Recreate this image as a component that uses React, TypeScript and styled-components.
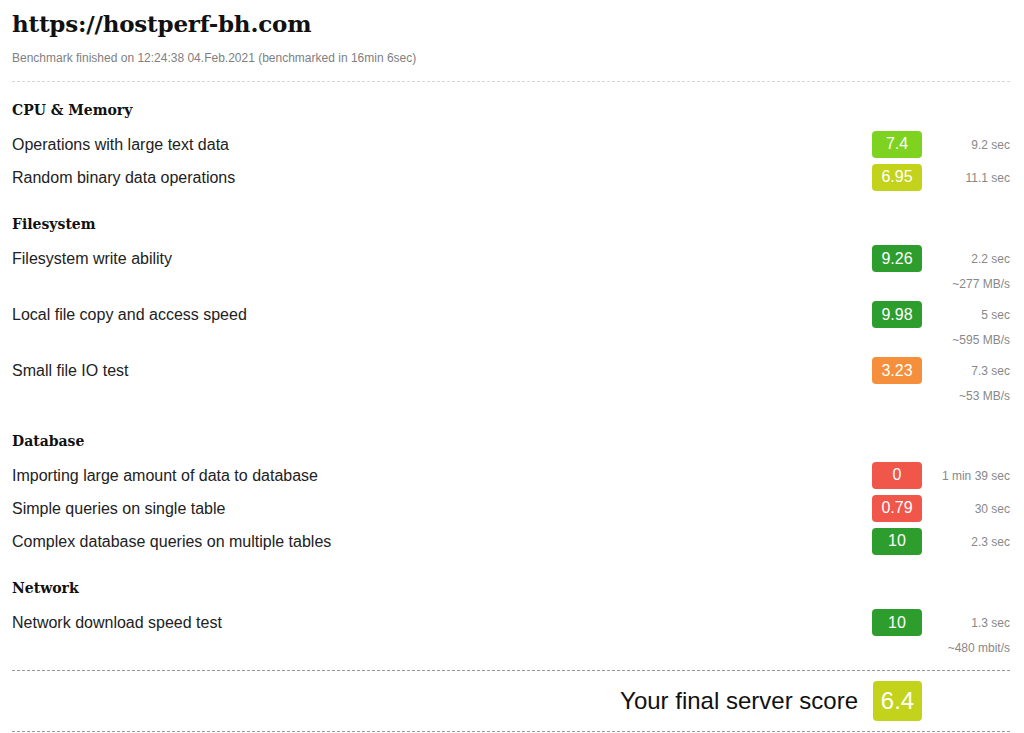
import styled, { createGlobalStyle } from "styled-components";

const GlobalStyle = createGlobalStyle`
  body {
    margin: 0;
    background: #fff;
    font-family: "Liberation Sans", Arial, sans-serif;
  }
`;

interface Test {
  label: string;
  score: string;
  color: string;
  time: string;
  extra?: string;
}

interface Group {
  title: string;
  tests: Test[];
}

const colors = {
  lime: "#7ed321",
  yellow: "#c3d31c",
  green: "#2d9d2d",
  orange: "#f68f3c",
  red: "#f0564a",
};

const groups: Group[] = [
  {
    title: "CPU & Memory",
    tests: [
      { label: "Operations with large text data", score: "7.4", color: colors.lime, time: "9.2 sec" },
      { label: "Random binary data operations", score: "6.95", color: colors.yellow, time: "11.1 sec" },
    ],
  },
  {
    title: "Filesystem",
    tests: [
      { label: "Filesystem write ability", score: "9.26", color: colors.green, time: "2.2 sec", extra: "~277 MB/s" },
      { label: "Local file copy and access speed", score: "9.98", color: colors.green, time: "5 sec", extra: "~595 MB/s" },
      { label: "Small file IO test", score: "3.23", color: colors.orange, time: "7.3 sec", extra: "~53 MB/s" },
    ],
  },
  {
    title: "Database",
    tests: [
      { label: "Importing large amount of data to database", score: "0", color: colors.red, time: "1 min 39 sec" },
      { label: "Simple queries on single table", score: "0.79", color: colors.red, time: "30 sec" },
      { label: "Complex database queries on multiple tables", score: "10", color: colors.green, time: "2.3 sec" },
    ],
  },
  {
    title: "Network",
    tests: [
      { label: "Network download speed test", score: "10", color: colors.green, time: "1.3 sec", extra: "~480 mbit/s" },
    ],
  },
];

export default function App() {
  return (
    <>
      <GlobalStyle />
      <Page>
        <Title>https://hostperf-bh.com</Title>
        <Subtitle>Benchmark finished on 12:24:38 04.Feb.2021 (benchmarked in 16min 6sec)</Subtitle>
        <Divider />
        {groups.map((group) => (
          <Section key={group.title}>
            <SectionTitle>{group.title}</SectionTitle>
            {group.tests.map((test) => (
              <Row key={test.label} $tall={!!test.extra}>
                <Label>{test.label}</Label>
                <Badge color={test.color}>{test.score}</Badge>
                <Stats>
                  <span>{test.time}</span>
                  {test.extra && <Extra>{test.extra}</Extra>}
                </Stats>
              </Row>
            ))}
          </Section>
        ))}
        <FinalRow>
          <FinalLabel>Your final server score</FinalLabel>
          <FinalBadge color={colors.yellow}>6.4</FinalBadge>
          <div />
        </FinalRow>
      </Page>
    </>
  );
}

const Page = styled.div`
  width: 998px;
  margin-left: 12px;
  padding-top: 7px;
  color: #222;
`;

const Title = styled.h1`
  margin: 0;
  font-family: "DejaVu Serif", Georgia, serif;
  font-weight: bold;
  font-size: 23px;
  line-height: 34px;
  color: #111;
  letter-spacing: -0.2px;
`;

const Subtitle = styled.div`
  margin-top: 10px;
  font-size: 12px;
  line-height: 14px;
  color: #808080;
`;

const Divider = styled.div`
  margin-top: 16px;
  border-top: 1px dashed #d6d6d6;
`;

const Section = styled.section`
  padding-top: 17.6px;
`;

const SectionTitle = styled.h2`
  margin: 0 0 11px;
  font-family: "DejaVu Serif", Georgia, serif;
  font-weight: bold;
  font-size: 14px;
  line-height: 20px;
  color: #111;
`;

const Row = styled.div<{ $tall: boolean }>`
  display: grid;
  grid-template-columns: 1fr 50px 88px;
  align-items: start;
  height: ${(p) => (p.$tall ? "56px" : "33px")};
`;

const Label = styled.div`
  font-size: 16px;
  line-height: 27px;
  color: #222;
`;

const Badge = styled.div<{ color: string }>`
  height: 27px;
  border-radius: 4px;
  background: ${(p) => p.color};
  color: #fff;
  font-size: 16px;
  display: flex;
  align-items: center;
  justify-content: center;
`;

const Stats = styled.div`
  display: flex;
  flex-direction: column;
  align-items: flex-end;
  font-size: 12px;
  line-height: 27px;
  color: #888;
  margin-top: 1px;
`;

const Extra = styled.span`
  line-height: 22px;
  margin-top: 0;
`;

const FinalRow = styled.div`
  display: grid;
  grid-template-columns: 1fr 50px 88px;
  align-items: center;
  padding: 10px 0;
  border-top: 1px dashed #999;
  border-bottom: 1px dashed #999;
  margin-top: 5px;
`;

const FinalLabel = styled.div`
  font-size: 24px;
  text-align: right;
  padding-right: 14px;
  color: #111;
`;

const FinalBadge = styled(Badge)`
  height: 40px;
  font-size: 24px;
  margin-left: 1px;
`;
